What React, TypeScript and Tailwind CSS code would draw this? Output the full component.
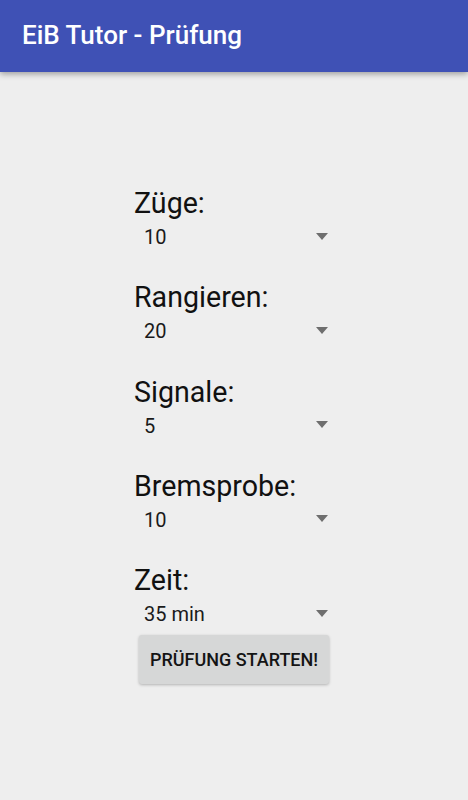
import React from "react";

const groups = [
  { label: "Züge:", value: "10" },
  { label: "Rangieren:", value: "20" },
  { label: "Signale:", value: "5" },
  { label: "Bremsprobe:", value: "10" },
  { label: "Zeit:", value: "35 min" },
];

export default function App() {
  return (
    <div
      className="w-[468px] h-[800px] bg-[#eeeeee] flex flex-col overflow-hidden"
      style={{ fontFamily: "Roboto, 'Noto Sans', sans-serif" }}
    >
      <div className="h-[72px] bg-[#3f51b5] flex items-center pl-[22px] shadow-[0_2px_6px_rgba(0,0,0,0.35)] relative z-10 shrink-0">
        <span className="text-white text-[26px] font-medium leading-none pb-[2px]">
          EiB Tutor - Prüfung
        </span>
      </div>
      <div className="pt-[114px] flex justify-center">
        <div className="w-[200px] flex flex-col">
          {groups.map((g, i) => (
            <div key={i} className={i < groups.length - 1 ? "h-[94.25px] flex flex-col" : "flex flex-col"}>
              <div className="text-[28.6px] leading-[34px] text-[#111111]">{g.label}</div>
              <div className="mt-[5px] h-[24px] flex items-center justify-between pl-[10px] pr-[6px]">
                <span className="text-[20px] leading-[24px] text-[#1a1a1a]">{g.value}</span>
                <span className="w-0 h-0 border-l-[6px] border-r-[6px] border-t-[7px] border-l-transparent border-r-transparent border-t-[#6e6e6e] mb-[2px]" />
              </div>
            </div>
          ))}
          <button className="mt-[9px] ml-[5px] w-[190px] h-[49px] rounded-[3px] bg-[#d6d7d7] shadow-[0_1px_3px_rgba(0,0,0,0.25)] text-[18px] font-medium text-[#141414] flex items-center justify-center">
            PRÜFUNG STARTEN!
          </button>
        </div>
      </div>
    </div>
  );
}
